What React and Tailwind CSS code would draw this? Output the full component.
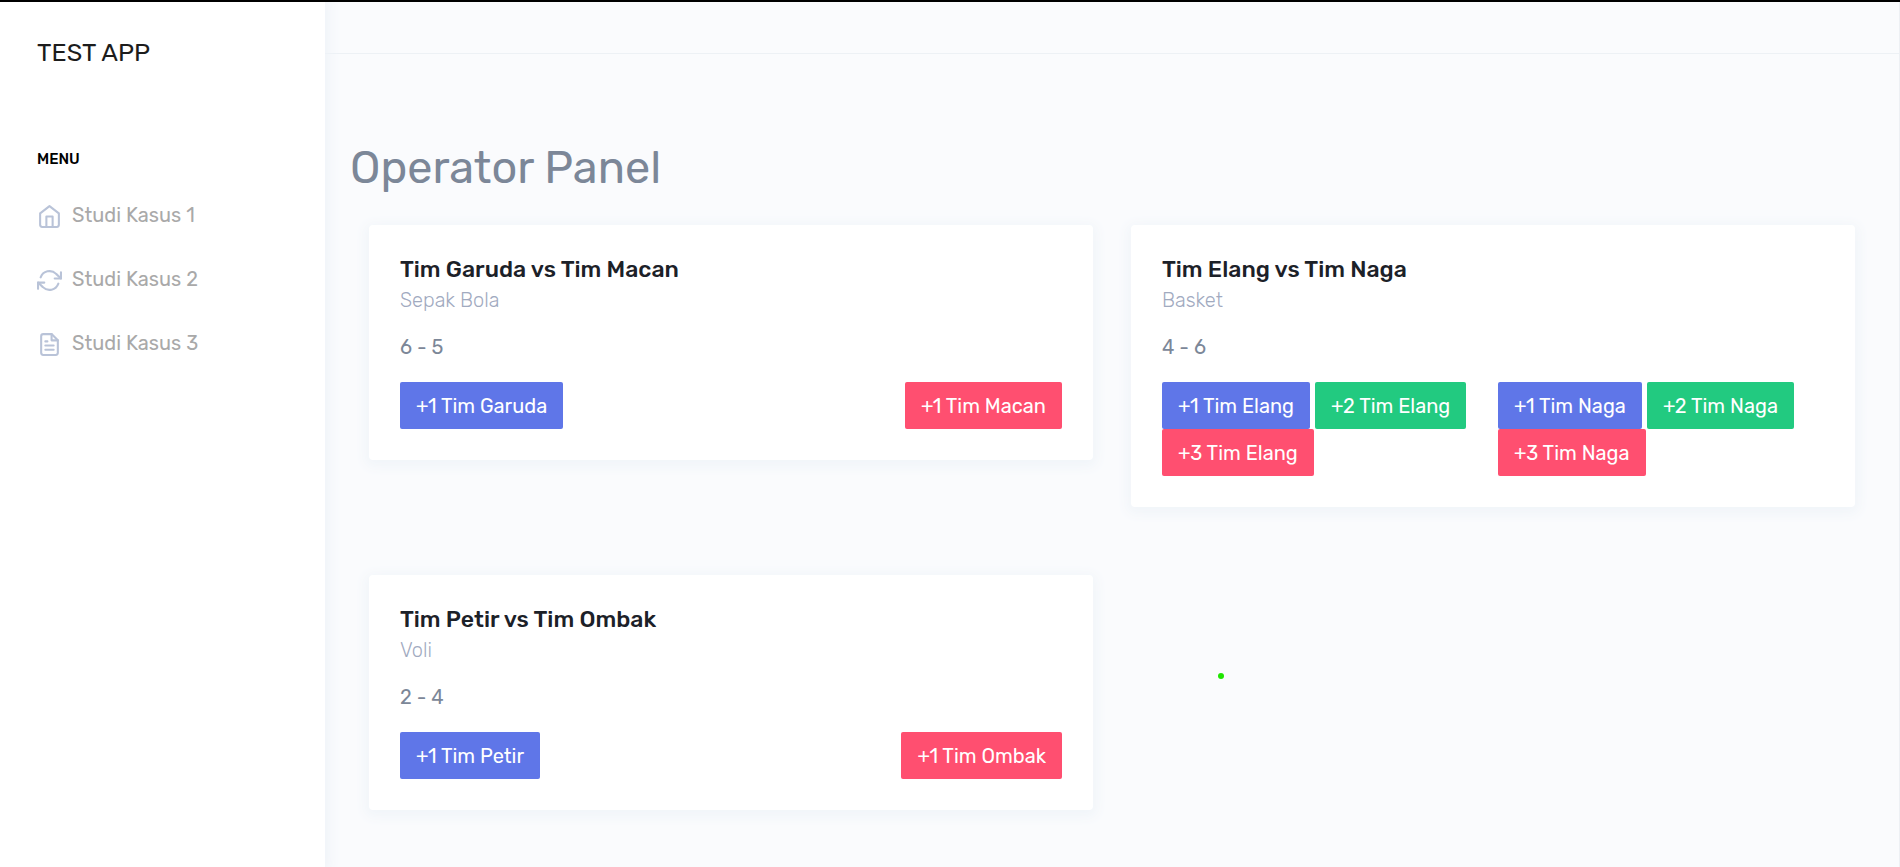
const base = {
  width: 25,
  height: 25,
  viewBox: "0 0 24 24",
  fill: "none",
  stroke: "currentColor",
  strokeWidth: 2,
  strokeLinecap: "round",
  strokeLinejoin: "round",
  "aria-hidden": true,
};

const HomeIcon = () => (
  <svg {...base}>
    <path d="M3 9l9-7 9 7v11a2 2 0 0 1-2 2H5a2 2 0 0 1-2-2z" />
    <polyline points="9 22 9 12 15 12 15 22" />
  </svg>
);

const RefreshIcon = () => (
  <svg {...base}>
    <polyline points="23 4 23 10 17 10" />
    <polyline points="1 20 1 14 7 14" />
    <path d="M3.51 9a9 9 0 0 1 14.85-3.36L23 10M1 14l4.64 4.36A9 9 0 0 0 20.49 15" />
  </svg>
);

const FileIcon = () => (
  <svg {...base}>
    <path d="M14 2H6a2 2 0 0 0-2 2v16a2 2 0 0 0 2 2h12a2 2 0 0 0 2-2V8z" />
    <polyline points="14 2 14 8 20 8" />
    <line x1="16" y1="13" x2="8" y2="13" />
    <line x1="16" y1="17" x2="8" y2="17" />
    <polyline points="10 9 9 9 8 9" />
  </svg>
);

const menu = [
  { label: "Studi Kasus 1", Icon: HomeIcon },
  { label: "Studi Kasus 2", Icon: RefreshIcon },
  { label: "Studi Kasus 3", Icon: FileIcon },
];

const tones = {
  blue: "bg-[#5f76e8]",
  green: "bg-[#22ca80]",
  red: "bg-[#ff4f70]",
};

const matches = [
  {
    title: "Tim Garuda vs Tim Macan",
    sport: "Sepak Bola",
    score: "6 - 5",
    home: [["+1 Tim Garuda", "blue"]],
    away: [["+1 Tim Macan", "red"]],
  },
  {
    title: "Tim Elang vs Tim Naga",
    sport: "Basket",
    score: "4 - 6",
    home: [["+1 Tim Elang", "blue"], ["+2 Tim Elang", "green"], ["+3 Tim Elang", "red"]],
    away: [["+1 Tim Naga", "blue"], ["+2 Tim Naga", "green"], ["+3 Tim Naga", "red"]],
  },
  {
    title: "Tim Petir vs Tim Ombak",
    sport: "Voli",
    score: "2 - 4",
    home: [["+1 Tim Petir", "blue"]],
    away: [["+1 Tim Ombak", "red"]],
  },
];

function ScoreButtons({ items, end }) {
  return (
    <div className={end ? "flex flex-wrap content-start justify-end gap-x-[5px]" : "flex flex-wrap content-start gap-x-[5px]"}>
      {items.map(([label, tone]) => (
        <button key={label} type="button" className={`h-[47px] rounded-xs px-4 text-xl text-white ${tones[tone]}`}>
          {label}
        </button>
      ))}
    </div>
  );
}

function MatchCard({ match }) {
  return (
    <article className="rounded bg-white p-[31px] shadow-[0_3px_12px_4px_#f1f5f9]">
      <h2 className="text-[23px] leading-[27px] font-medium text-[#1c2128]">{match.title}</h2>
      <p className="mt-0.5 text-xl leading-[30px] font-light text-[#a1aabf]">{match.sport}</p>
      <p className="mt-[17px] text-xl leading-[31px] text-[#7c8798]">{match.score}</p>
      <div className="mt-[19px] grid grid-cols-2 gap-[10px]">
        <ScoreButtons items={match.home} />
        <ScoreButtons items={match.away} end={match.away.length === 1} />
      </div>
    </article>
  );
}

export default function App() {
  return (
    <div className="flex min-h-screen flex-col bg-[#fafbfd] font-['Rubik','Roboto',sans-serif]">
      <div className="relative z-20 h-0.5 shrink-0 bg-black" />
      <div className="flex flex-1">
        <aside className="z-10 w-[325px] shrink-0 bg-white px-[37px] shadow-[0_0_12px_4px_#eff3f8]">
          <div className="flex h-[101px] items-center">
            <a href="#" className="text-[25px] text-[#1c1c1c]">TEST APP</a>
          </div>
          <nav aria-label="Menu" className="pt-[44px]">
            <h2 className="text-[15px] leading-6 font-medium text-black">MENU</h2>
            <ul className="mt-3">
              {menu.map(({ label, Icon }) => (
                <li key={label}>
                  <a href="#" className="flex h-16 items-center gap-[10px] text-xl text-[#a9a9a9]">
                    <span className="pt-0.5 text-[#b9c3d8]"><Icon /></span>
                    {label}
                  </a>
                </li>
              ))}
            </ul>
          </nav>
        </aside>
        <div className="min-w-0 flex-1 border-r border-[#edf0f4]">
          <header className="h-[52px] border-b border-[#edf1f5]" />
          <main className="px-[25px] pt-[86px]">
            <h1 className="text-[45px] leading-[56px] text-[#7c8798]">Operator Panel</h1>
            <div className="mt-[29px] grid grid-cols-2 items-start gap-x-[38px] gap-y-[68px] px-[19px]">
              {matches.map((match) => (
                <MatchCard key={match.title} match={match} />
              ))}
            </div>
          </main>
        </div>
      </div>
      <span aria-hidden="true" className="absolute top-[673px] left-[1218px] size-[6px] rounded-full bg-[#1fe600]" />
    </div>
  );
}
